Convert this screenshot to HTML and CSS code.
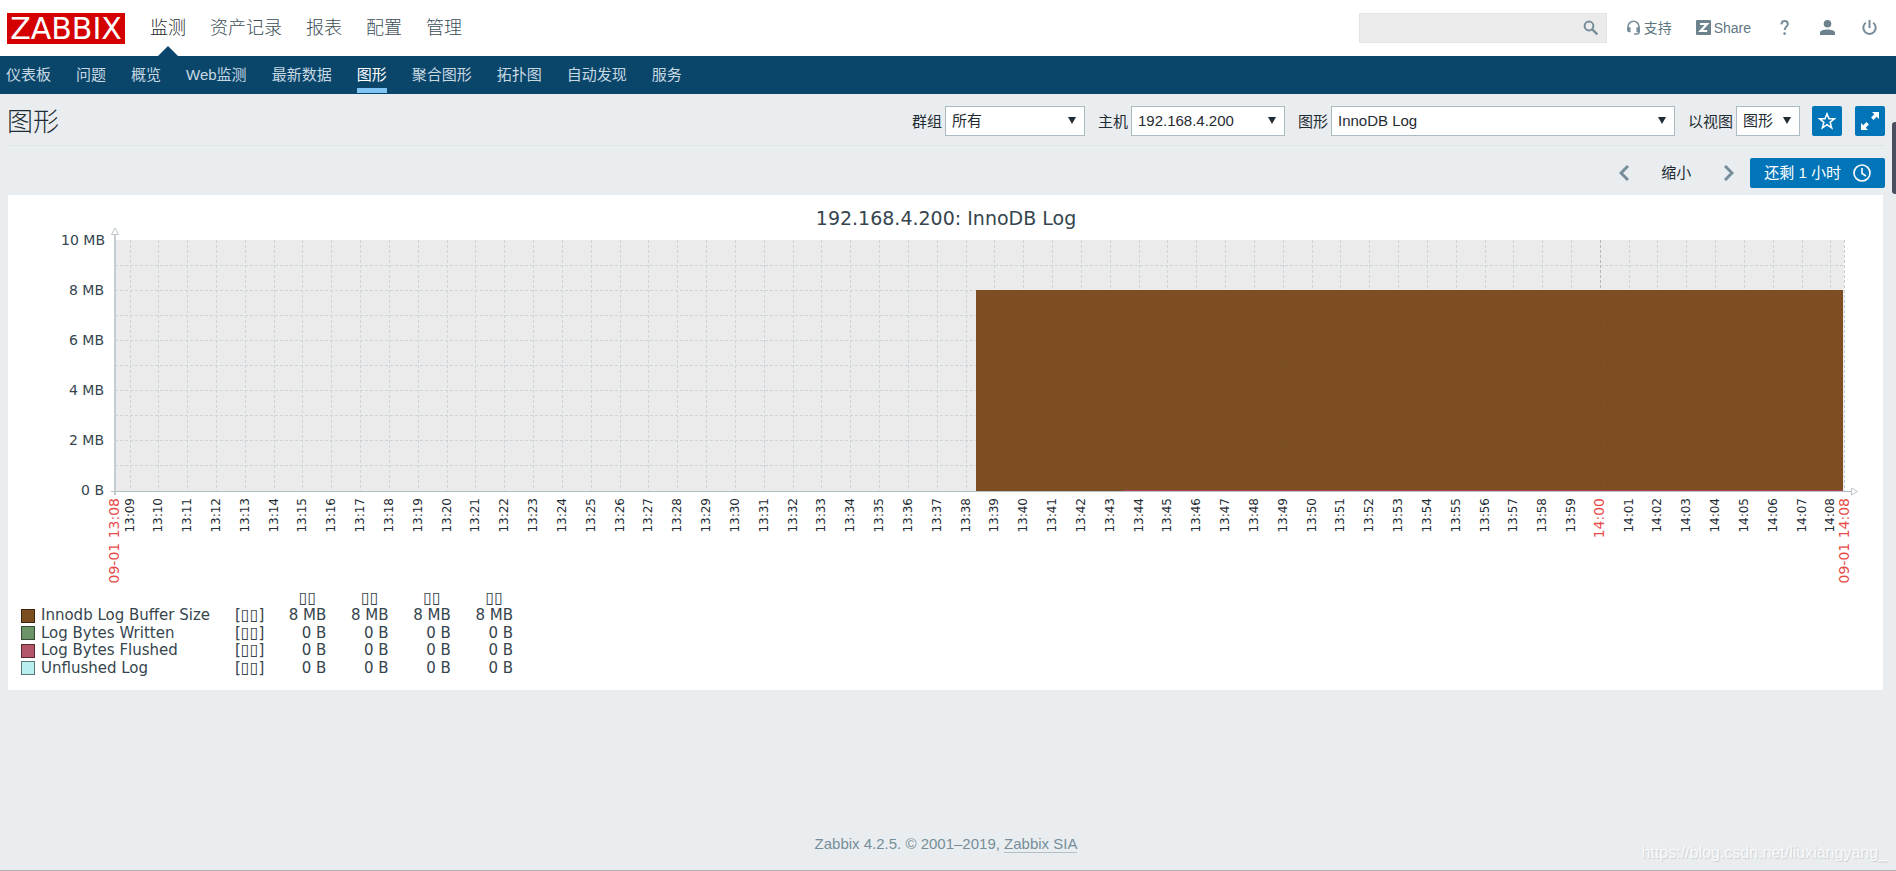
FILE: index.html
```html
<!DOCTYPE html>
<html lang="zh-CN">
<head>
<meta charset="utf-8">
<title>图形</title>
<link rel="stylesheet" href="styles.css">
</head>
<body>
<header class="top">
  <a class="logo" href="#">ZABBIX</a>
  <nav class="main-nav">
    <a class="active" href="#">监测</a>
    <a href="#">资产记录</a>
    <a href="#">报表</a>
    <a href="#">配置</a>
    <a href="#">管理</a>
  </nav>
  <form class="search">
    <input type="text" aria-label="搜索">
    <button type="button" aria-label="搜索">
      <svg width="16" height="16" viewBox="0 0 16 16" fill="none" stroke="#768d99" stroke-width="2"><circle cx="6" cy="6" r="4.4"/><path d="M9.3 9.3l5 5" stroke-width="2.4"/></svg>
    </button>
  </form>
  <div class="tools">
    <a class="support" href="#"><svg width="15" height="15" viewBox="0 0 15 15"><path d="M2 10V6.8a5.5 5.5 0 0 1 11 0V12a2 2 0 0 1-2 2H8" fill="none" stroke="#768d99" stroke-width="1.6"/><path d="M1.2 7.2h3.3v5H3a1.8 1.8 0 0 1-1.8-1.8zM10.5 7.2h3.3v5h-3.3z" fill="#768d99"/></svg>支持</a>
    <a class="share" href="#"><svg width="15" height="15" viewBox="0 0 15 15"><rect width="15" height="15" rx="1" fill="#6c828d"/><path d="M4 4h7L4.6 11H11.2" fill="none" stroke="#fff" stroke-width="2.2"/></svg>Share</a>
    <a class="help" href="#" aria-label="帮助"><svg width="15" height="15" viewBox="0 0 15 15"><path d="M3.400 4.400C3.600 2 4.800 1 6.600 1c2 0 3.200 1.100 3.200 2.900 0 2.600-3.100 3-3.100 6.100" fill="none" stroke="#768d99" stroke-width="2"/><circle cx="6.600" cy="13.600" r="1.400" fill="#768d99"/></svg></a>
    <a class="user" href="#" aria-label="用户"><svg width="15" height="15" viewBox="0 0 15 15" fill="#6c828d"><circle cx="7.5" cy="3.8" r="3.8"/><path d="M0 15v-2.200C0 10.200 4 9.400 7.500 9.400s7.500.8 7.500 3.400V15z"/></svg></a>
    <a class="power" href="#" aria-label="退出"><svg width="15" height="15" viewBox="0 0 15 15" fill="none" stroke="#768d99" stroke-width="2"><path d="M3.800 2.800a6.200 6.200 0 1 0 7.400 0M7.500 0v8"/></svg></a>
  </div>
</header>
<nav class="sub-nav">
  <a href="#">仪表板</a>
  <a href="#">问题</a>
  <a href="#">概览</a>
  <a href="#">Web监测</a>
  <a href="#">最新数据</a>
  <a class="active" href="#">图形</a>
  <a href="#">聚合图形</a>
  <a href="#">拓扑图</a>
  <a href="#">自动发现</a>
  <a href="#">服务</a>
</nav>
<main>
  <div class="title-row">
    <h1>图形</h1>
    <form class="filters">
      <div class="field"><label for="group">群组</label><span class="pick group"><select id="group"><option>所有</option></select></span></div>
      <div class="field"><label for="host">主机</label><span class="pick host"><select id="host"><option>192.168.4.200</option></select></span></div>
      <div class="field"><label for="graph">图形</label><span class="pick graph"><select id="graph"><option>InnoDB Log</option></select></span></div>
      <div class="field"><label for="view">以视图</label><span class="pick view"><select id="view"><option>图形</option></select></span></div>
      <div class="actions">
        <button class="icon-btn" type="button" aria-label="收藏"><svg width="18" height="18" viewBox="0 0 18 18" fill="none" stroke="#fff" stroke-width="1.500" stroke-linejoin="miter"><path d="M9 1.800l2 5h5.400l-4.300 3.500 1.600 5.600L9 12.600l-4.700 3.300 1.600-5.600L1.600 6.800H7z"/></svg></button>
        <button class="icon-btn" type="button" aria-label="全屏"><svg width="18" height="18" viewBox="0 0 18 18" fill="#fff"><path d="M11 0h7v7l-2.300-2.300-3.200 3.200-2.400-2.400 3.200-3.200zM0 11l2.300 2.300 3.200-3.200 2.400 2.400-3.200 3.200L7 18H0z"/></svg></button>
      </div>
    </form>
  </div>
  <div class="time-row">
    <button class="plain" type="button" aria-label="向前"><svg width="10" height="16" viewBox="0 0 10 16" fill="none" stroke="#768d99" stroke-width="3"><path d="M9 1L2 8l7 7"/></svg></button>
    <button class="plain zoom-out" type="button">缩小</button>
    <button class="plain" type="button" aria-label="向后"><svg width="10" height="16" viewBox="0 0 10 16" fill="none" stroke="#768d99" stroke-width="3"><path d="M1 1l7 7-7 7"/></svg></button>
    <button class="period" type="button">还剩 1 小时<svg width="18" height="18" viewBox="0 0 18 18" fill="none" stroke="#fff" stroke-width="1.600"><circle cx="9" cy="9" r="8"/><path d="M9 4v5.500l4 2.500"/></svg></button>
  </div>
  <section class="panel">
    <svg class="chart" id="chart" viewBox="0 0 1875 395" role="img" aria-label="192.168.4.200: InnoDB Log"></svg>
    <table class="legend">
      <colgroup><col class="c-name"><col class="c-fn"><col><col><col><col></colgroup>
      <thead><tr><td></td><td></td><th><span class="box">▯▯</span></th><th><span class="box">▯▯</span></th><th><span class="box">▯▯</span></th><th><span class="box">▯▯</span></th></tr></thead>
      <tbody>
        <tr><th><i class="swatch buffer"></i>Innodb Log Buffer Size</th><td>[<span class="box">▯▯</span>]</td><td>8 MB</td><td>8 MB</td><td>8 MB</td><td>8 MB</td></tr>
        <tr><th><i class="swatch written"></i>Log Bytes Written</th><td>[<span class="box">▯▯</span>]</td><td>0 B</td><td>0 B</td><td>0 B</td><td>0 B</td></tr>
        <tr><th><i class="swatch flushed"></i>Log Bytes Flushed</th><td>[<span class="box">▯▯</span>]</td><td>0 B</td><td>0 B</td><td>0 B</td><td>0 B</td></tr>
        <tr><th><i class="swatch unflushed"></i>Unflushed Log</th><td>[<span class="box">▯▯</span>]</td><td>0 B</td><td>0 B</td><td>0 B</td><td>0 B</td></tr>
      </tbody>
    </table>
  </section>
</main>
<footer>Zabbix 4.2.5. © 2001–2019, <a href="#">Zabbix SIA</a></footer>
<div class="side-handle"></div>
<div class="watermark">https://blog.csdn.net/liuxiangyang_</div>
<script src="chart.js"></script>
</body>
</html>
```
FILE: styles.css
```css
* { box-sizing: border-box; }
body {
  margin: 0;
  min-height: 100vh;
  display: flex;
  flex-direction: column;
  position: relative;
  background: #e9edf0;
  border-bottom: 1px solid #aeb2b6;
  color: #1f2c33;
  font: 15px/20px "Liberation Sans", "Noto Sans CJK SC", sans-serif;
}
a { color: inherit; text-decoration: none; }
button, input, select { font: inherit; color: inherit; }
svg { display: block; flex: none; }

.top {
  display: flex;
  align-items: center;
  height: 56px;
  padding: 0 19px 0 7px;
  background: #fff;
}
.logo {
  width: 118px;
  height: 31px;
  background: #d40000;
  color: #fff;
  font: 30px/31px "DejaVu Sans", sans-serif;
  text-align: center;
}
.main-nav {
  display: flex;
  gap: 24px;
  align-self: stretch;
  margin-left: 25px;
  font-size: 18px;
  line-height: 57px;
  font-weight: 300;
  color: #3c4d57;
}
.main-nav a { position: relative; }
.main-nav .active { color: #1f2c33; }
.main-nav .active::after {
  content: "";
  position: absolute;
  left: 50%;
  bottom: 0;
  margin-left: -10px;
  border: 10px solid transparent;
  border-top: 0;
  border-bottom-color: #0a466a;
}
.search {
  display: flex;
  width: 248px;
  height: 30px;
  margin-left: auto;
  background: #ebebeb;
  border: 1px solid #dfe4e7;
}
.search input { flex: 1; min-width: 0; border: 0; background: none; }
.search button { border: 0; background: none; padding: 0 7px; }
.tools {
  display: flex;
  align-items: center;
  gap: 27px;
  margin-left: 19px;
  color: #5f7683;
  font-size: 14px;
  line-height: 18px;
  padding-bottom: 1px;
}
.tools a { display: flex; align-items: center; gap: 3px; }
.support { margin-right: -3px; }

.sub-nav {
  display: flex;
  gap: 25px;
  height: 38px;
  padding: 0 6px;
  background: #0a466a;
  color: #c7d8e2;
  line-height: 37px;
}
.sub-nav a { height: 37px; }
.sub-nav .active { color: #fff; border-bottom: 5px solid #7ec5f4; }

main { padding: 0 11px 0 7px; }
.title-row {
  display: flex;
  align-items: center;
  justify-content: space-between;
  height: 52px;
  padding-top: 2px;
  border-bottom: 1px solid #dfe4e7;
}
h1 { margin: 0; padding-top: 2px; font-size: 26px; line-height: 36px; font-weight: 300; }
.filters { display: flex; align-items: center; gap: 13px; }
.actions { display: flex; gap: 13px; margin-left: -1px; }
.field { display: flex; align-items: center; gap: 3px; }
.field label { padding-top: 2px; }
.pick { position: relative; display: flex; }
.pick::after {
  content: "";
  position: absolute;
  right: 9px;
  top: 11px;
  border: 4px solid transparent;
  border-top: 7px solid #1f2c33;
  border-bottom: 0;
  pointer-events: none;
}
.pick select {
  appearance: none;
  width: 100%;
  height: 30px;
  padding: 0 6px;
  border: 1px solid #acbbc2;
  border-radius: 0;
  background: #fff;
}
.group { width: 140px; }
.host { width: 154px; }
.graph { width: 344px; }
.view { width: 64px; }
.icon-btn {
  display: flex;
  align-items: center;
  justify-content: center;
  width: 30px;
  height: 30px;
  padding: 0;
  border: 0;
  border-radius: 2px;
  background: #0275b8;
}
.time-row {
  display: flex;
  align-items: center;
  justify-content: flex-end;
  padding: 12px 0 7px;
}
.plain { border: 0; background: none; padding: 0; }
.zoom-out { margin: 0 33px 0 32px; }
.period {
  display: flex;
  align-items: center;
  gap: 12px;
  height: 30px;
  margin-left: 16px;
  padding: 0 14px;
  border: 0;
  border-radius: 2px;
  background: #0275b8;
  color: #fff;
}

.panel {
  margin: 0 2px 0 1px;
  padding-bottom: 13px;
  background: #fff;
  font-family: "DejaVu Sans", sans-serif;
  color: #36454d;
}
.chart { width: 100%; height: auto; font-family: "DejaVu Sans", sans-serif; }
.chart .title { font-size: 19px; text-anchor: middle; fill: #36454d; }
.chart .y { font-size: 14px; text-anchor: end; fill: #36454d; }
.chart .x { font-size: 12px; text-anchor: end; fill: #1f2c33; }
.chart .main { font-size: 14px; fill: #e84a47; }
.chart .plot { fill: #ebebeb; }
.chart .grid { stroke: #ccd5d9; stroke-dasharray: 3 2; }
.chart .hour { stroke: #b8b8b8; stroke-dasharray: 3 2; }
.chart .edge { stroke: #c4ced3; stroke-dasharray: 3 2; }
.chart .area { fill: #774718; fill-opacity: .96; }
.chart .flush { fill: #b04055; }
.chart .axis { fill: none; stroke: #c3ced3; stroke-width: 2; }
.chart .base { fill: none; stroke: #b4c1c7; }
.chart .tip { fill: #fff; stroke: #bcc8ce; }

.legend {
  table-layout: fixed;
  width: 493px;
  height: 87px;
  margin-left: 12px;
  border-collapse: collapse;
  font-size: 15px;
  line-height: 17px;
}
.legend .c-name { width: 215px; }
.legend .c-fn { width: 29px; }
.legend th, .legend td { padding: 0; font-weight: 400; text-align: right; white-space: nowrap; }
.legend thead th { padding-right: 10px; }
.legend tbody th { display: flex; align-items: center; gap: 6px; padding-left: 1px; text-align: left; }
.box { font-size: 16px; line-height: 1px; }
.swatch { width: 14px; height: 14px; border: 1px solid #333; }
.buffer { background: #7c4d20; border-color: #3e2710; }
.written { background: #6c9468; border-color: #364a34; }
.flushed { background: #b45468; border-color: #5a2a34; }
.unflushed { background: #b7eff0; border-color: #5c7778; }

footer {
  margin-top: auto;
  padding: 0 4px 16px 0;
  text-align: center;
  color: #768d99;
}
footer a { border-bottom: 1px solid #b4c0c7; }
.side-handle {
  position: absolute;
  top: 122px;
  right: 0;
  width: 4px;
  height: 72px;
  border-radius: 3px 0 0 3px;
  background: #4b5060;
}
.watermark {
  position: absolute;
  right: 9px;
  bottom: 7px;
  color: #f8fafb;
  font-size: 16px;
  text-shadow: 1px 1px 1px #c9ced2;
}
```
FILE: chart.js
```js
const NS = "http://www.w3.org/2000/svg";
const chart = document.getElementById("chart");

function add(tag, attrs, text) {
  const el = document.createElementNS(NS, tag);
  for (const key in attrs) el.setAttribute(key, attrs[key]);
  if (text) el.textContent = text;
  chart.appendChild(el);
}

function xLabel(x, text, cls) {
  add("text", { class: cls === "x" ? "x" : "x main", transform: `translate(${x + 4} 303) rotate(-90)` }, text);
}

const left = 107, right = 1836, top_ = 45, bottom = 296;

add("text", { class: "title", x: 938, y: 30 }, "192.168.4.200: InnoDB Log");
add("rect", { class: "plot", x: left, y: top_, width: right - left, height: bottom - top_ });

for (let i = 1; i < 10; i++) {
  const y = top_ + i * 25 + 0.5;
  add("path", { class: "grid", d: `M${left} ${y}H${right}` });
}
["10 MB", "8 MB", "6 MB", "4 MB", "2 MB", "0 B"].forEach((t, i) => {
  add("text", { class: "y", x: i ? 96 : 97, y: 50 + i * 50 }, t);
});

for (let i = 0; i < 60; i++) {
  const minute = 9 + i;
  const hour = 13 + Math.floor(minute / 60);
  const label = hour + ":" + String(minute % 60).padStart(2, "0");
  const x = Math.round(121.5 + i * 28.83);
  const full = minute === 60;
  add("path", { class: full ? "hour" : "grid", d: `M${x + 0.5} ${top_}V${bottom}` });
  xLabel(x, label, full ? "main" : "x");
}
add("path", { class: "edge", d: `M${right + 0.5} ${top_}V${bottom}` });
xLabel(left, "09-01 13:08", "main");
xLabel(right + 1, "09-01 14:08", "main");

add("rect", { class: "area", x: 968, y: 95, width: 867, height: 201 });
add("rect", { class: "flush", x: 1115, y: 295, width: 720, height: 1 });
add("path", { class: "axis", d: `M${left} 40V300` });
add("path", { class: "base", d: `M103 ${bottom + 0.5}H1843` });
add("path", { class: "tip", d: "M103.500 39.500h7l-3.500-6.500z" });
add("path", { class: "tip", d: "M1843.500 293v7l6-3.500z" });
```
